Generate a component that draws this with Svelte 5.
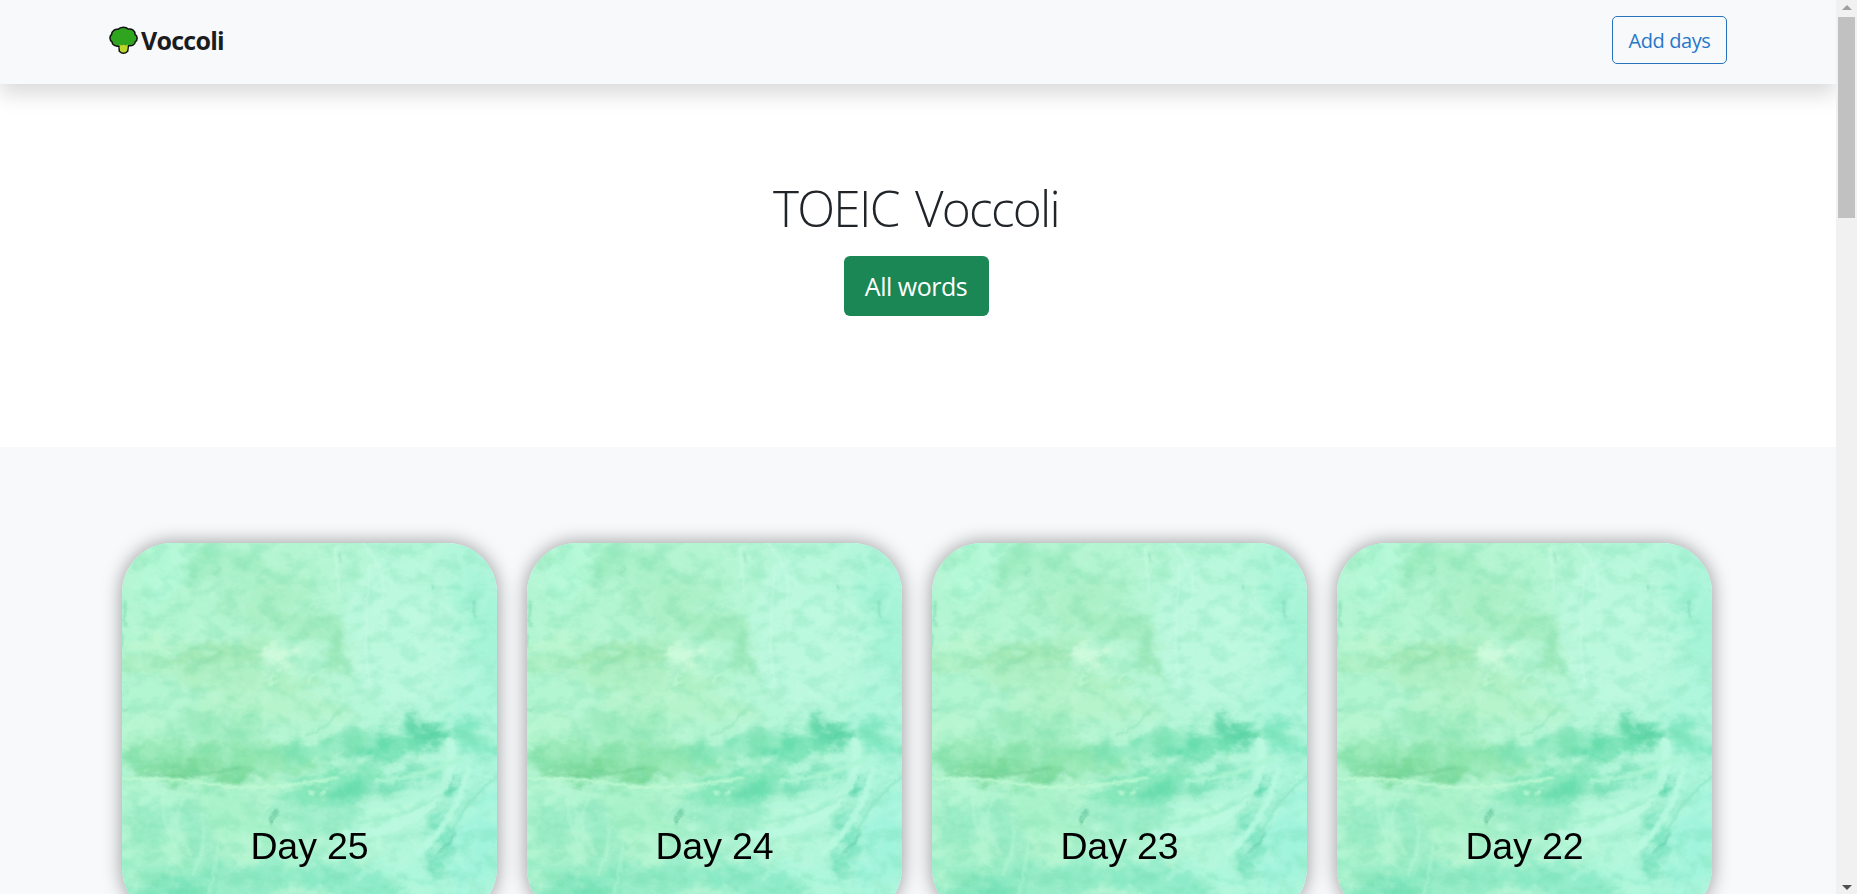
<script>
  const days = [25, 24, 23, 22];

  // Soft pigment patches: cx, cy, rx, ry, rotation, colour, opacity
  const washes = [
    [80, 18, 75, 20, 10, '#98eaba', 0.55],
    [45, 20, 22, 50, 25, '#b7fbdc', 0.7],
    [300, 35, 35, 16, 35, '#90ebc2', 0.55],
    [355, 70, 22, 50, -15, '#a3f3d6', 0.7],
    [145, 55, 55, 14, -10, '#a3ecbe', 0.5],
    [180, 80, 60, 12, 8, '#a0eaba', 0.7],
    [220, 108, 15, 24, 10, '#98e6b4', 0.7],
    [100, 112, 60, 12, -5, '#a0e6b1', 0.8],
    [30, 120, 45, 7, -6, '#a6e9b6', 0.7],
    [120, 137, 80, 12, 4, '#aeefc0', 0.8],
    [30, 100, 42, 6, -4, '#bff7d0', 0.8],
    [280, 90, 58, 80, 0, '#bdf9e0', 0.8],
    [150, 163, 80, 13, 4, '#b7f4cb', 0.8],
    [95, 182, 50, 14, 8, '#96e8b8', 0.7],
    [20, 190, 32, 25, 0, '#b8f7cf', 0.7],
    [95, 217, 100, 19, 2, '#8be3aa', 0.85],
    [75, 230, 65, 8, 3, '#79d798', 0.9],
    [220, 202, 62, 12, -10, '#7de3b5', 0.8],
    [280, 201, 45, 13, -16, '#5fdaa9', 0.85],
    [302, 190, 22, 8, 35, '#55d0a1', 0.7],
    [350, 195, 28, 13, 38, '#7be6be', 0.8],
    [210, 243, 55, 13, -14, '#7be4b5', 0.85],
    [225, 252, 22, 12, -40, '#60daaa', 0.65],
    [275, 240, 48, 7, -17, '#74e0b7', 0.8],
    [325, 248, 12, 8, -40, '#56d1a8', 0.9],
    [45, 270, 45, 18, 12, '#b3f6d4', 0.85],
    [110, 270, 45, 19, 40, '#a3f1c5', 0.7],
    [25, 285, 22, 24, -20, '#8fe8c0', 0.7],
    [75, 295, 17, 40, -30, '#93e9c3', 0.7],
    [200, 275, 65, 14, 6, '#92eac3', 0.75],
    [278, 270, 50, 12, -18, '#b5f8dc', 0.9],
    [314, 279, 12, 6, -30, '#69dcb7', 0.8],
    [320, 310, 7, 42, 16, '#71e0bc', 0.9],
    [355, 300, 20, 60, 15, '#a0f4dc', 0.9],
    [160, 315, 38, 19, -40, '#adf5d3', 0.7],
    [45, 328, 62, 13, 5, '#92ebc3', 0.8],
    [120, 342, 75, 20, -8, '#89e9c3', 0.8],
    [235, 340, 57, 18, 15, '#82e7c3', 0.75],
    [290, 335, 45, 13, 25, '#adf7dc', 0.8],
    [35, 351, 45, 10, -8, '#72e0b6', 0.8],
    [157, 114, 18, 11, 5, '#cefbdb', 1]
  ];

  // Dry brush marks: path, colour, width, opacity
  const strokes = [
    ['M0 236 Q55 235 95 242 T215 235', '#c0fad4', 2.4, 1],
    ['M0 108 Q35 100 65 107', '#bff7d0', 3, 0.6],
    ['M65 107 q18 -5 35 2 q-9 9 -24 10', '#83daa4', 1.5, 0.5],
    ['M151 130 l-3 12 8 -5 M195 130 q-12 7 -8 9', '#c6fad8', 2, 0.8],
    ['M328 199 Q337 230 306 264 Q270 293 224 291', '#bbf9e0', 9, 0.85],
    ['M346 226 Q334 278 297 309', '#b9fae1', 6, 0.8],
    ['M339 215 Q303 235 254 238', '#acf4d3', 5, 0.85],
    ['M325 237 Q292 261 240 263', '#b2f6da', 5, 0.85],
    ['M318 252 Q282 277 235 278', '#9beccb', 2, 0.8],
    ['M375 234 Q344 256 328 293', '#80e1bf', 2, 0.7],
    ['M333 290 q-5 13 -17 20', '#53c29c', 2, 0.6],
    ['M219 167 q-13 18 -35 26', '#8bdfb2', 2, 0.6],
    ['M240 0 Q267 28 260 60 M213 5 l4 44 M248 21 q-8 70 -1 118', '#cbfce9', 2, 0.6],
    ['M150 281 l-2 -6 7 -8 m1 2 l-6 10', '#50b58a', 1.4, 0.85],
    ['M4 58 l-2 20 2 5 M0 91 v11 M352 57 l1 18 M311 42 v4', '#60c79e', 1.3, 0.65],
    ['M218 10 l1 9 M94 31 l3 -7 M0 167 l5 -1', '#79cda7', 1.3, 0.6],
    ['M56 310 Q35 270 42 244 M68 310 Q43 275 64 255', '#b8f8d7', 4, 0.4],
    ['M70 332 Q85 303 81 283 M87 354 Q92 323 97 303', '#bbfadc', 3, 0.45],
    ['M236 335 q38 -28 75 0 M277 350 q28 -13 70 8', '#b3f7de', 5, 0.5],
    ['M20 230 Q58 238 118 225', '#6dca8e', 1.6, 0.65]
  ];
  const flecks = [[190, 250, 2.6], [201, 250, 2.2], [181, 239, 1.6], [204, 245, 1.2], [297, 214, 2], [105, 180, 1.3], [154, 132, 1.6], [168, 274, 1.2]];
</script>

<div class="screen">
  <div class="page">
    <header>
      <a class="brand" href="#top">
        <svg viewBox="0 0 29 29" aria-hidden="true">
          <path class="stem" d="M9.7 17 L10.3 25.2 Q14.5 29.5 18.7 25.2 L19.7 17Z" />
          <path class="crown" d="M8.2 20.2 C4.9 19.8 3.2 18 3.1 16 C.2 14.2 .4 9.9 2.6 8.5 C2.6 4.8 6.3 2.7 9.1 3.3 C11.4 .5 17.1 .4 19.2 3.1 C23.1 2.5 26.1 4.9 26 8.3 C28.8 9.9 28.9 14.2 26.2 16 C26 18.8 22.5 20.4 20.1 19.6 L17.6 20.3 Q14.5 18.7 12 20.3Z" />
          <path class="stem-front" d="M10.4 18.3 Q12.5 19.9 14.7 18.5 Q17 19.9 18.9 18.3 L18.1 24 Q14.5 27.5 11.1 24Z" />
        </svg>
        <span>Voccoli</span>
      </a>
      <button class="add">Add days</button>
    </header>
    <section class="hero">
      <h1>TOEIC Voccoli</h1>
      <button class="all">All words</button>
    </section>
    <main>
      {#each days as day, i}
        <article>
          <svg class="paint" viewBox="0 0 375 375" aria-hidden="true">
            <defs>
              <linearGradient id="base{i}" x1="0" y1="0.15" x2="1" y2="0.3">
                <stop offset="0" stop-color="#b1f5d2" />
                <stop offset="0.4" stop-color="#b4f5d0" />
                <stop offset="0.75" stop-color="#b5f7da" />
                <stop offset="1" stop-color="#adf6dd" />
              </linearGradient>
              <filter id="wash{i}" x="-20%" y="-20%" width="140%" height="140%" color-interpolation-filters="sRGB">
                <feGaussianBlur stdDeviation="4.8" result="soft" />
                <feTurbulence type="fractalNoise" baseFrequency="0.05 0.07" numOctaves="6" seed="8" result="noise" />
                <feDisplacementMap in="soft" in2="noise" scale="28" xChannelSelector="R" yChannelSelector="G" />
              </filter>
              <filter id="brush{i}" x="-10%" y="-10%" width="120%" height="120%" color-interpolation-filters="sRGB">
                <feGaussianBlur stdDeviation="0.8" result="soft" />
                <feTurbulence type="fractalNoise" baseFrequency="0.12" numOctaves="4" seed="3" result="noise" />
                <feDisplacementMap in="soft" in2="noise" scale="5" xChannelSelector="R" yChannelSelector="G" />
              </filter>
              <filter id="light{i}" x="0" y="0" width="100%" height="100%" color-interpolation-filters="sRGB">
                <feTurbulence type="fractalNoise" baseFrequency="0.045 0.05" numOctaves="6" seed="17" />
                <feColorMatrix values="0 0 0 0 0.8  0 0 0 0 0.99  0 0 0 0 0.89  3 0 0 0 -1.25" />
              </filter>
              <filter id="dark{i}" x="0" y="0" width="100%" height="100%" color-interpolation-filters="sRGB">
                <feTurbulence type="fractalNoise" baseFrequency="0.05 0.07" numOctaves="7" seed="29" />
                <feColorMatrix values="0 0 0 0 0.3  0 0 0 0 0.78  0 0 0 0 0.56  0 3.4 0 0 -1.5" />
              </filter>
            </defs>
            <rect width="375" height="375" fill="url(#base{i})" />
            <g filter="url(#wash{i})">
              {#each washes as [x, y, rx, ry, angle, color, alpha]}
                <ellipse cx={x} cy={y} {rx} {ry} transform="rotate({angle} {x} {y})" fill={color} opacity={alpha} />
              {/each}
            </g>
            <rect width="375" height="375" filter="url(#light{i})" opacity="0.23" />
            <rect width="375" height="375" filter="url(#dark{i})" opacity="0.15" />
            <g filter="url(#brush{i})" fill="none" stroke-linecap="round">
              {#each strokes as [d, color, width, alpha]}
                <path {d} stroke={color} stroke-width={width} opacity={alpha} />
              {/each}
              {#each flecks as [x, y, r]}
                <circle cx={x} cy={y} {r} fill="#bff9d7" opacity="0.8" />
              {/each}
            </g>
          </svg>
          <h2>Day {day}</h2>
        </article>
      {/each}
    </main>
  </div>
  <div class="scrollbar" aria-hidden="true">
    <svg viewBox="0 0 10 5"><path d="M0 5 5 0l5 5z" fill="#a0a0a0" /></svg>
    <div class="thumb"></div>
    <svg viewBox="0 0 10 5"><path d="M0 0h10L5 5z" fill="#505050" /></svg>
  </div>
</div>

<style>
  :global(body) { margin: 0; overflow: hidden; }
  .screen { display: flex; width: 1857px; height: 894px; overflow: hidden; font-family: "Open Sans", "Noto Sans", sans-serif; background: #fff; }
  .page { width: 1836px; height: 894px; overflow: hidden; flex: none; }
  header { box-sizing: border-box; height: 84px; padding: 16px 109px; display: flex; justify-content: space-between; align-items: flex-start; background: #f8f9fb; position: relative; box-shadow: 0 10px 20px rgba(0, 0, 0, .15); }
  .brand { display: flex; align-items: center; height: 49px; color: #1b1c1e; text-decoration: none; font-size: 25px; font-weight: 700; line-height: 48px; letter-spacing: -.75px; }
  .brand span { padding-bottom: 2px; }
  .brand svg { width: 29px; height: 29px; margin-right: 3px; }
  .crown { fill: #2fa51f; stroke: #111; stroke-width: 1.5; stroke-linejoin: round; }
  .stem { fill: #b8d82b; stroke: #111; stroke-width: 1.5; }
  .stem-front { fill: #b8d82b; }
  button { font-family: inherit; padding: 0; box-sizing: border-box; white-space: nowrap; }
  .add { width: 115px; height: 48px; border: 1px solid #2774bd; border-radius: 5px; background: transparent; color: #2778ca; font-size: 20px; letter-spacing: -.4px; line-height: 46px; padding-top: 1px; }
  .hero { height: 363px; box-sizing: border-box; padding-top: 92px; display: flex; flex-direction: column; align-items: center; padding-right: 4px; }
  h1 { margin: 0 0 20px; height: 60px; line-height: 64px; font-size: 49.5px; font-weight: 300; letter-spacing: -1.7px; word-spacing: 5px; color: #212529; white-space: nowrap; }
  .all { width: 145px; height: 60px; border: 0; border-radius: 6px; background: #1a8754; color: #fff; font-size: 25px; line-height: 60px; letter-spacing: -.5px; }
  main { height: 447px; box-sizing: border-box; padding: 96px 122px 0; display: grid; grid-template-columns: repeat(4, 375px); column-gap: 30px; background: #f8f9fb; }
  article { display: grid; height: 375px; border-radius: 50px; overflow: hidden; box-shadow: 0 0 19px rgba(0, 0, 0, .4); }
  .paint, h2 { grid-area: 1 / 1; }
  .paint { width: 375px; height: 375px; display: block; }
  h2 { z-index: 1; align-self: start; margin: 0; padding-top: 281px; text-align: center; font: 400 37.5px/44px "Liberation Sans", Arial, sans-serif; letter-spacing: -.1px; color: #000; }
  .scrollbar { width: 21px; height: 894px; box-sizing: border-box; background: #f1f1f1; display: flex; flex-direction: column; align-items: center; padding: 5px 0 4px; }
  .scrollbar svg { width: 10px; height: 5px; flex: none; }
  .thumb { width: 17px; height: 201px; margin-top: 7px; margin-bottom: auto; background: #c1c1c1; }
</style>
